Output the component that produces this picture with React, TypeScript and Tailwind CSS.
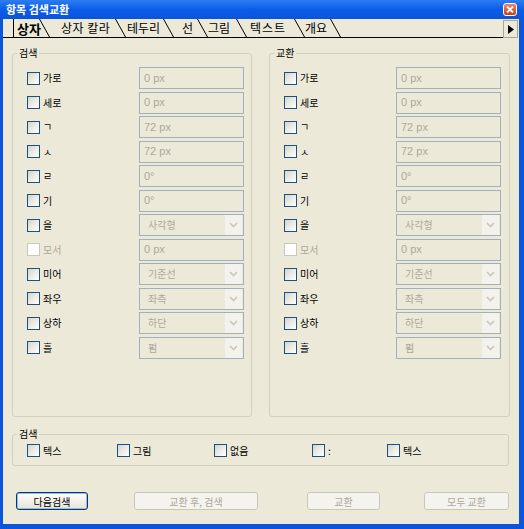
import React from 'react'

const KR = { fontFamily: '"Noto Sans CJK KR", "Noto Sans", sans-serif' }
const LAT = { fontFamily: '"Liberation Sans", Arial, sans-serif' }

type Row = { label: string; value: string; kind: 'input' | 'select'; disabled?: boolean }

const rows: Row[] = [
  { label: '가로', value: '0 px', kind: 'input' },
  { label: '세로', value: '0 px', kind: 'input' },
  { label: 'ㄱ', value: '72 px', kind: 'input' },
  { label: 'ㅅ', value: '72 px', kind: 'input' },
  { label: 'ㄹ', value: '0°', kind: 'input' },
  { label: '기', value: '0°', kind: 'input' },
  { label: '을', value: '사각형', kind: 'select' },
  { label: '모서', value: '0 px', kind: 'input', disabled: true },
  { label: '미어', value: '기준선', kind: 'select' },
  { label: '좌우', value: '좌측', kind: 'select' },
  { label: '상하', value: '하단', kind: 'select' },
  { label: '흘', value: '펌', kind: 'select' },
]

const tabs = [
  { label: '상자', box: 'w-[26px] pl-[3px] font-bold text-[13px]', first: true },
  { label: '상자 칼라', box: 'w-[65px] pl-[11px] text-[12px] tracking-[0.5px]' },
  { label: '테두리', box: 'w-[37px] pl-[1px] text-[12px]' },
  { label: '선', box: 'w-[23px] pl-[8px] text-[12px]' },
  { label: '그림', box: 'w-[28px] pl-0 text-[12px]' },
  { label: '텍스트', box: 'w-[47px] pl-[3px] text-[12px] tracking-[1px]' },
  { label: '개요', box: 'w-[25px] pl-0 text-[12px]' },
]

function Check({ disabled }: { disabled?: boolean }) {
  return (
    <div
      className={
        disabled
          ? 'w-[13px] h-[13px] shrink-0 border border-[#cac8bb] bg-white'
          : 'w-[13px] h-[13px] shrink-0 border border-[#1c5180] bg-gradient-to-br from-[#d4d4ce] via-[#ecebe6] to-white'
      }
    />
  )
}

function Field({ row }: { row: Row }) {
  return (
    <div className="w-[105px] h-[22px] border border-[#a3afba] bg-[#ece9d8] flex items-center">
      <span
        className="flex-1 pl-[4px] text-[11px] text-[#aca899] leading-none"
        style={row.kind === 'select' ? { ...KR, fontSize: 10, paddingLeft: 8 } : LAT}
      >
        {row.value}
      </span>
      {row.kind === 'select' && (
        <div className="w-[17px] h-[20px] mr-[1px] bg-[#f3f2ec] flex items-center justify-center">
          <svg width="9" height="6" viewBox="0 0 9 6">
            <path d="M1 1 L4.5 4.5 L8 1" fill="none" stroke="#c9c7ba" strokeWidth="1.6" />
          </svg>
        </div>
      )}
    </div>
  )
}

function Panel({ title, width }: { title: string; width: string }) {
  return (
    <div className={`relative ${width} h-[364px] border border-[#d0d0bf] rounded-[3px] pl-[14px] pt-[13px]`}>
      <span className="absolute left-[4px] -top-[8px] px-[2px] bg-[#ece9d8] text-[10px] text-black leading-[14px]" style={KR}>
        {title}
      </span>
      <div className="flex flex-col gap-[2.5px]">
        {rows.map((r) => (
          <div key={r.label} className="flex items-center h-[22px]">
            <div className="w-[112px] flex items-center gap-[3px]">
              <Check disabled={r.disabled} />
              <span className={`text-[10px] leading-none ${r.disabled ? 'text-[#aca899]' : 'text-black'}`} style={KR}>
                {r.label}
              </span>
            </div>
            <Field row={r} />
          </div>
        ))}
      </div>
    </div>
  )
}

function Btn({ label, width, primary }: { label: string; width: string; primary?: boolean }) {
  return (
    <div
      className={
        primary
          ? `${width} h-[18px] rounded-[3px] border border-[#003c74] bg-gradient-to-b from-white to-[#e6e3d6] shadow-[inset_0_0_0_1px_#9cb9ee] flex items-center justify-center text-[10px] text-black`
          : `${width} h-[18px] rounded-[3px] border border-[#c9c7ba] bg-[#f4f3ee] flex items-center justify-center text-[10px] text-[#aca899]`
      }
      style={KR}
    >
      {label}
    </div>
  )
}

export default function App() {
  return (
    <div className="w-[524px] h-[529px] bg-[#0b55de] flex flex-col">
      {/* Title bar */}
      <div className="h-[19px] flex items-center justify-between bg-gradient-to-b from-[#2c7cf2] via-[#0c5ce8] to-[#0a54dc] pl-[6px] pr-[7px]">
        <span className="text-[11px] font-bold text-white leading-none" style={KR}>
          항목 검색교환
        </span>
        <div className="w-[14px] h-[13px] rounded-[3px] border border-white bg-gradient-to-b from-[#e8876a] to-[#c4401c] flex items-center justify-center">
          <svg width="8" height="7" viewBox="0 0 8 7">
            <path d="M1 0.5 L7 6.5 M7 0.5 L1 6.5" stroke="white" strokeWidth="1.8" />
          </svg>
        </div>
      </div>

      <div className="ml-[3px] mr-[5px] h-[505px] bg-[#ece9d8] flex flex-col">
        {/* Tabs */}
        <div className="h-[19px] flex items-end">
          <div className="flex-1 h-[19px] border-b border-black flex items-stretch pl-[10px]">
            {tabs.map((t) => (
              <div key={t.label} className="flex items-stretch">
                <div
                  className={`${t.box} ${t.first ? 'border-l border-black' : ''} flex items-center whitespace-nowrap text-black leading-none`}
                  style={KR}
                >
                  {t.label}
                </div>
                <svg width="11" height="18" viewBox="0 0 11 18" className="shrink-0">
                  <path d="M0.5 0 L10.5 18" stroke="black" strokeWidth="1" />
                </svg>
              </div>
            ))}
          </div>
          <div className="w-[15px] h-[18px] border border-[#a8a699] bg-[#ece9d8] flex items-center justify-center mr-[1px]">
            <svg width="6" height="9" viewBox="0 0 6 9">
              <path d="M0 0 L6 4.5 L0 9 Z" fill="black" />
            </svg>
          </div>
        </div>

        {/* Panels */}
        <div className="flex mt-[15px] ml-[9px] gap-[17px]">
          <Panel title="검색" width="w-[240px]" />
          <Panel title="교환" width="w-[241px]" />
        </div>

        {/* Bottom group */}
        <div className="relative mt-[17px] ml-[9px] w-[497px] h-[32px] border border-[#d0d0bf] rounded-[3px] flex items-center pl-[14px]">
          <span className="absolute left-[4px] -top-[8px] px-[2px] bg-[#ece9d8] text-[10px] text-black leading-[14px]" style={KR}>
            검색
          </span>
          {[
            { l: '텍스', w: 'w-[90px]' },
            { l: '그림', w: 'w-[97px]' },
            { l: '없음', w: 'w-[98px]' },
            { l: ':', w: 'w-[75px]' },
            { l: '텍스', w: 'w-[60px]' },
          ].map((c, i) => (
            <div key={i} className={`${c.w} flex items-center gap-[3px] pt-[1px]`}>
              <Check />
              <span className="text-[10px] text-black leading-none" style={KR}>
                {c.l}
              </span>
            </div>
          ))}
        </div>

        {/* Buttons */}
        <div className="flex mt-[26px] ml-[13px]">
          <Btn label="다음검색" width="w-[72px]" primary />
          <div className="ml-[46px]">
            <Btn label="교환 후, 검색" width="w-[124px]" />
          </div>
          <div className="ml-[49px]">
            <Btn label="교환" width="w-[73px]" />
          </div>
          <div className="ml-[44px]">
            <Btn label="모두 교환" width="w-[85px]" />
          </div>
        </div>
      </div>
    </div>
  )
}
